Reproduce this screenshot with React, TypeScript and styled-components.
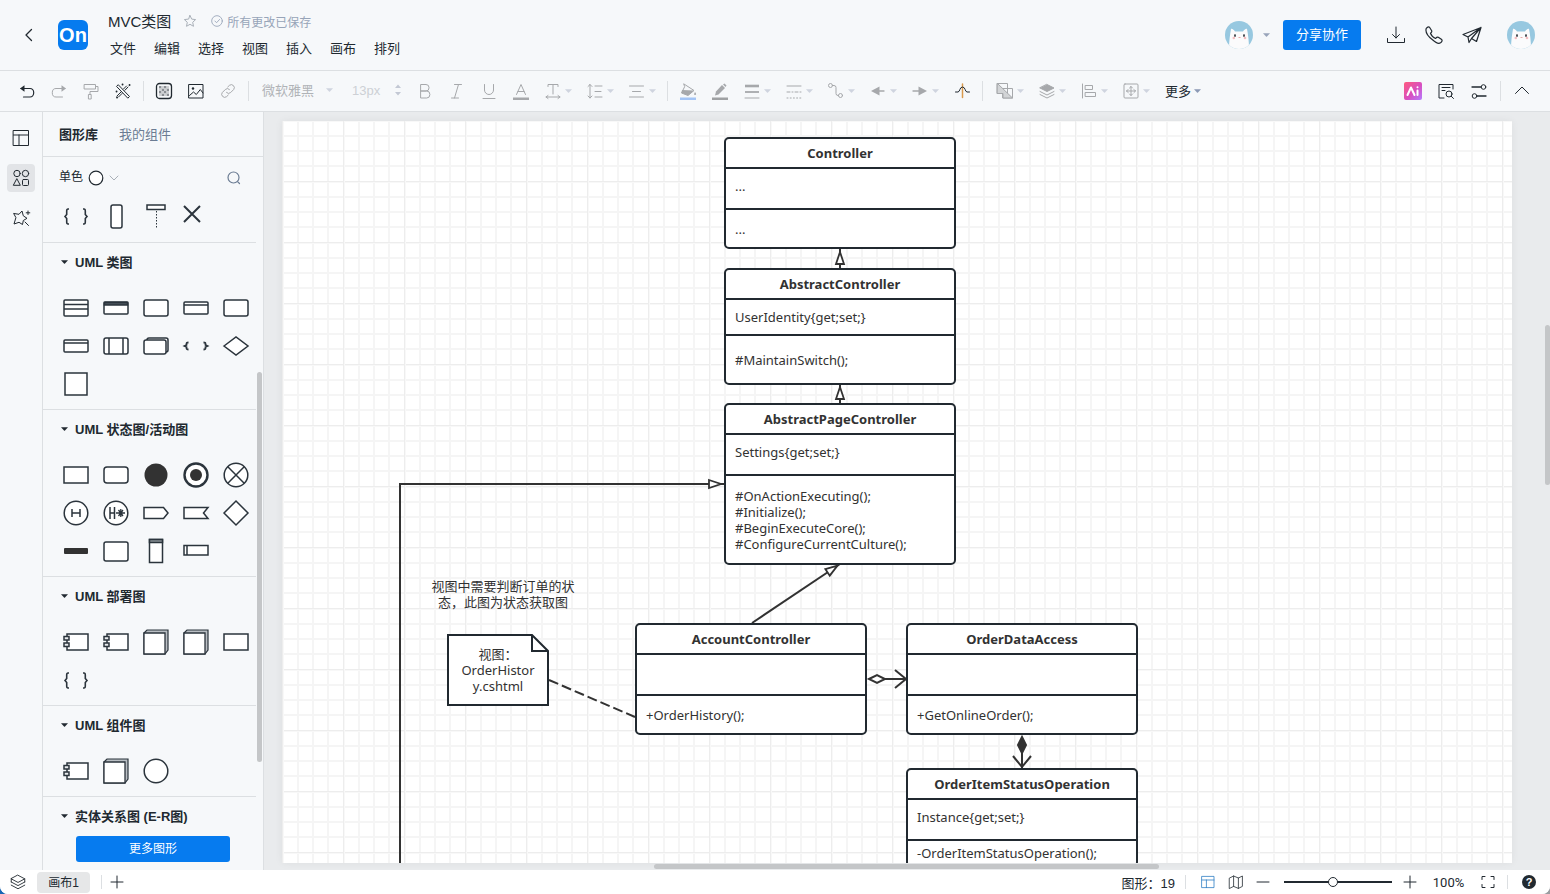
import React from "react";
import styled, { createGlobalStyle, css } from "styled-components";

const blue = "#067bef";
const ink = "#212930";
const line = "#dcdfe2";
const muted = "#a6a8ab";

const GlobalStyle = createGlobalStyle`
  * { box-sizing: border-box; }
  body {
    margin: 0;
    background: linear-gradient(90deg, #1766b5 50%, #9a9da1 50%);
    font-family: "Liberation Sans", "Noto Sans CJK SC", sans-serif;
    font-size: 13px;
    color: ${ink};
  }
  button, input, select { font: inherit; color: inherit; }
  button { border: 0; padding: 0; background: none; cursor: pointer; }
`;

/* ---------- page frame ---------- */

const Shell = styled.div`
  display: flex;
  flex-direction: column;
  height: 100vh;
  overflow: hidden;
  border-radius: 0 0 8px 8px;
  background: #f6f8fa;
`;

const Svg = styled.svg<{ $size?: number; $w?: number }>`
  display: block;
  flex: none;
  width: ${(p) => p.$size ?? 20}px;
  height: ${(p) => p.$size ?? 20}px;
  fill: none;
  stroke: currentColor;
  stroke-width: ${(p) => p.$w ?? 1};
  stroke-linecap: round;
  stroke-linejoin: round;
`;

const CaretSvg = styled.svg<{ $color?: string }>`
  display: block;
  flex: none;
  width: 7px;
  height: 4px;
  fill: ${(p) => p.$color ?? "#cfd4df"};
`;

const Caret = ({ color }: { color?: string }) => (
  <CaretSvg $color={color} viewBox="0 0 7 4" aria-hidden="true">
    <path d="M0 0.3h7L4 3.6a0.7 0.7 0 0 1-1 0z" />
  </CaretSvg>
);

/* ---------- header ---------- */

const Header = styled.header`
  flex: none;
  display: flex;
  align-items: center;
  height: 71px;
  padding: 0 15px 0 19px;
  border-bottom: 1px solid ${line};
`;

const Logo = styled.a`
  display: flex;
  align-items: center;
  justify-content: center;
  width: 30px;
  height: 30px;
  margin-left: 19px;
  border-radius: 6px;
  background: ${blue};
  color: #fff;
  font-size: 20px;
  font-weight: 700;
  text-decoration: none;
`;

const Heading = styled.div`
  margin-left: 13px;
`;

const TitleRow = styled.div`
  display: flex;
  align-items: center;
  height: 28px;
  padding-left: 7px;
`;

const Title = styled.h1`
  margin: 0 12px 0 0;
  padding-bottom: 2px;
  font-size: 15px;
  font-weight: 400;
`;

const Saved = styled.span`
  display: flex;
  align-items: center;
  gap: 4px;
  margin-left: 14px;
  color: #97a4b8;
  font-size: 12px;
`;

const Grey = styled.span`
  color: #a9b0b8;
`;

const Menu = styled.nav`
  display: flex;
  button {
    height: 28px;
    padding: 0 9px 3px;
  }
`;

const HeaderRight = styled.div`
  display: flex;
  align-items: center;
  margin-left: auto;
`;

const ShareButton = styled.button`
  width: 78px;
  height: 30px;
  margin: 0 16px 0 13px;
  padding-bottom: 3px;
  border-radius: 3px;
  background: ${blue};
  color: #fff;
`;

const HeaderIcon = styled.button`
  display: grid;
  place-items: center;
  width: 38px;
  height: 30px;
`;

const Collaborators = styled.button`
  display: flex;
  align-items: center;
  gap: 10px;
`;

const Account = styled.button`
  margin-left: 16px;
`;

const AvatarSvg = styled.svg`
  display: block;
  width: 28px;
  height: 28px;
  border-radius: 50%;
`;

const Avatar = () => (
  <AvatarSvg viewBox="0 0 28 28" aria-hidden="true">
    <rect width="28" height="28" fill="#97c8e0" />
    <path d="M4 28C4 20 5 14 6 8c1-1 3 1 4 2.500h8C19 9 21 7 22 8c1 5 2 12 2 20z" fill="#fbfbfc" />
    <ellipse cx="10" cy="14.500" rx="0.900" ry="1.500" fill="#3c4248" />
    <ellipse cx="19" cy="14.500" rx="0.900" ry="1.500" fill="#3c4248" />
    <circle cx="8.800" cy="17" r="1.300" fill="#f4bcc0" />
    <circle cx="20" cy="17" r="1.300" fill="#f4bcc0" />
    <path d="M13.500 16.500h2" stroke="#e9a9a9" />
  </AvatarSvg>
);

/* ---------- toolbar ---------- */

const Toolbar = styled.div`
  flex: none;
  display: flex;
  align-items: center;
  height: 41px;
  padding: 0 12px 0 11px;
  border-bottom: 1px solid ${line};
`;

const Tool = styled.button<{ $on?: boolean; $menu?: boolean }>`
  display: flex;
  align-items: center;
  flex: none;
  gap: 2px;
  width: ${(p) => (p.$menu ? 42 : 32)}px;
  height: 30px;
  padding-left: 6px;
  color: ${(p) => (p.$on ? ink : muted)};
`;

const ArrangeTools = styled.div`
  display: flex;
  margin-left: 2px;
`;

const Divider = styled.span<{ $short?: boolean }>`
  flex: none;
  width: 1px;
  height: ${(p) => (p.$short ? 14 : 20)}px;
  margin: 0 4px;
  background: ${line};
`;

const FontBox = styled.div`
  display: flex;
  align-items: center;
  width: 156px;
  padding: 0 0 2px 9px;
  color: #b0b3b7;
`;

const FontSelect = styled.select`
  width: 64px;
  appearance: none;
  border: 0;
  padding: 0;
  background: none;
`;

const SizeInput = styled.input`
  width: 40px;
  margin-left: 19px;
  border: 0;
  padding: 0;
  background: none;
  color: #cdd0d5;
`;

const Stepper = styled.span`
  color: #c3c8d4;
`;

const MoreButton = styled.button`
  display: flex;
  align-items: center;
  gap: 3px;
  margin-left: 8px;
  padding-bottom: 1px;
`;

const ToolRight = styled.div`
  display: flex;
  align-items: center;
  margin-left: auto;
`;

const SideTool = styled.button<{ $wide?: boolean }>`
  display: grid;
  place-items: center;
  width: ${(p) => (p.$wide ? 34 : 33)}px;
  height: 30px;
`;

const AiBadge = styled.span`
  display: grid;
  place-items: center;
  width: 18px;
  height: 18px;
  border-radius: 2px;
  background: linear-gradient(135deg, #ff5a7d 0%, #d84fc0 55%, #b57bff 100%);
  color: #fff;
`;

type ToolDef = { label: string; art: React.ReactNode; menu?: boolean; on?: boolean };

const tools: Record<string, ToolDef[]> = {
  history: [
    { label: "撤销", on: true, art: <><path d="M4 7.500h9a3.500 4 0 0 1 0 8.500H6.500" strokeWidth="1.200" /><path d="M3 7.500l4.500-3.200v6.400z" fill="currentColor" stroke="none" /></> },
    { label: "重做", art: <><path d="M16 7.500H7a3.500 4 0 0 0 0 8.500h6.500" /><path d="M17 7.500l-4.500-3.200v6.400z" fill="currentColor" stroke="none" /></> },
    { label: "格式刷", art: <><path d="M3.500 3.500h11v4.500h-11zM14.500 5.500h2.500v5H9v3" /><path d="M7.800 13.500h2.400v4.500H7.800z" /></> },
    { label: "美化", on: true, art: <><path d="M5.500 4l11 11.500-1.700 1.700-11-11.500zM13.500 5l-3 3M15 6l-3 3.200M8 11l-4 4M9 12.500l-3.500 3.500" /><path d="M9.500 3.500h.1M16.500 4h.1M3.500 10.500h.1M4 16.500h.1" strokeWidth="1.800" /></> },
  ],
  insert: [
    { label: "背景", on: true, art: <><rect x="2.500" y="2.500" width="15" height="15" rx="3" strokeWidth="1.300" /><path d="M5 5h2.500v2.500H5zM10 5h2.500v2.500H10zM7.500 7.500H10V10H7.500zM12.500 7.500H15V10h-2.500zM5 10h2.500v2.500H5zM10 10h2.500v2.500H10zM7.500 12.500H10V15H7.500zM12.500 12.500H15V15h-2.500z" fill="#8b8f94" stroke="none" /><path d="M7.500 5H10v2.500H7.500zM12.500 5H15v2.500h-2.500zM5 7.500h2.500V10H5zM10 7.500h2.500V10H10zM7.500 10H10v2.500H7.500zM12.500 10H15v2.500h-2.500zM5 12.500h2.500V15H5zM10 12.500h2.500V15H10z" fill="#cfd1d4" stroke="none" /></> },
    { label: "图片", on: true, art: <><path d="M3 3.500h14v13.500H3z" /><path d="M3.500 14.500l4-3.500 2.800 2.500 4-5L17 12" /><circle cx="7" cy="7.500" r="1.200" fill="currentColor" stroke="none" /></> },
    { label: "链接", art: <path d="M8.500 11.500a3 3 0 0 0 4.200 0l3-3a3 3 0 0 0-4.200-4.200L9.700 6M11.500 8.500a3 3 0 0 0-4.200 0l-3 3a3 3 0 0 0 4.200 4.200l1.800-1.700" /> },
  ],
  text: [
    { label: "加粗", art: <path d="M6 3.500h5a3 3.200 0 0 1 0 6.500H6zM6 10h5.700a3.200 3.500 0 0 1 0 7H6z" /> },
    { label: "斜体", art: <path d="M7.500 3.500h7M4.500 17h7M11.500 3.500L7.500 17" /> },
    { label: "下划线", art: <path d="M5.500 3.500v5.500a4.500 4.500 0 0 0 9 0V3.500M4 17.500h12" /> },
    { label: "文字颜色", art: <><path d="M5.500 13.500L10 3.500l4.500 10M7 10.500h6" /><path d="M2 16.500h16v2.500H2z" fill="currentColor" stroke="none" /></> },
    { label: "字间距", menu: true, art: <path d="M5 5.500v-2h10v2M10 3.500V13M3 16h14M5 14.500L3 16l2 1.500M15 14.500l2 1.500-2 1.500" /> },
    { label: "行高", menu: true, art: <path d="M5 3.500v13.500M3 5.500l2-2 2 2M3 15l2 2 2-2M10 5h7M10 10.500h6M10 16h7" /> },
    { label: "对齐", menu: true, art: <path d="M2.500 5h14M5.500 10.500h8M2.500 16h14" /> },
  ],
  line: [
    { label: "填充颜色", art: <><path d="M6 3l10 6.500-6 5L3.500 12 6.500 6z" /><path d="M4 9l12 .5-6 5L3.500 12z" fill="currentColor" stroke="none" /><path d="M17 11c1.500 2 1.500 3 0 3s-1-1 0-3z" fill="currentColor" stroke="none" /><path d="M2 16.500h16v2.500H2z" fill="#a3c4f5" stroke="none" /></> },
    { label: "线条颜色", art: <><path d="M5 14.500l1-4 6-6.500 3 3-6.500 6.500z" fill="currentColor" stroke="none" /><path d="M13 3.500l1.500-1 2 2L15.500 6z" fill="currentColor" stroke="none" /><path d="M2 16.500h16v2.500H2z" fill="#9fa1a3" stroke="none" /></> },
    { label: "线条宽度", menu: true, art: <><path d="M3 5h14" strokeWidth="2.600" strokeLinecap="butt" /><path d="M3 11h14" strokeWidth="1.800" strokeLinecap="butt" /><path d="M3 17h14" /></> },
    { label: "线条样式", menu: true, art: <><path d="M3 5h14" /><path d="M3 11h14" strokeDasharray="3 2 1 2" /><path d="M3 17h14" strokeDasharray="1 2.200" /></> },
    { label: "连线类型", menu: true, art: <><circle cx="4.500" cy="4.500" r="2" /><circle cx="14.500" cy="14.500" r="2" /><path d="M6.500 4.500H8a2 2 0 0 1 2 2v6a2 2 0 0 0 2 2h.5" /></> },
    { label: "起点", menu: true, art: <><path d="M8 10h8" strokeWidth="1.300" /><path d="M3 10l8.500-4.500v9z" fill="currentColor" stroke="none" /></> },
    { label: "终点", menu: true, art: <><path d="M3 10h8" strokeWidth="1.300" /><path d="M17 10L8.500 5.500v9z" fill="currentColor" stroke="none" /></> },
    { label: "跨线", on: true, art: <><path d="M10.500 3v13.500" stroke="#d99a4e" strokeWidth="1.500" /><path d="M3.500 11H6c2 0 1.500-5 4.500-5s2.500 5 4.500 5h2.500" /></> },
  ],
  arrange: [
    { label: "组合", menu: true, art: <><path d="M2.500 2.500h10v10h-10zM8 7.500h9.500V17H8z" /><path d="M2.500 2.500L17.500 17H8v-4.500H2.500z" fill="#d2d4d6" /></> },
    { label: "图层", menu: true, art: <><path d="M10 3.500l7 3.500-7 3.500L3 7z" fill="currentColor" /><path d="M3 10.500l7 3.500 7-3.500M3 13.500l7 3.500 7-3.500" /></> },
    { label: "对齐图形", menu: true, art: <path d="M3.500 3v14M6.500 4.500h7v4h-7zM6.500 11.500h10v4h-10z" /> },
    { label: "分布", menu: true, art: <><rect x="3" y="3" width="14" height="14" rx="1" /><path d="M10 5.500v9M5.500 10h9M8.500 7L10 5.500 11.500 7M8.500 13l1.500 1.500 1.500-1.500M7 8.500L5.500 10 7 11.500M13 8.500l1.500 1.500-1.500 1.500" /></> },
  ],
};

const ToolGroup = ({ items }: { items: ToolDef[] }) => (
  <>
    {items.map((t) => (
      <Tool key={t.label} $on={t.on} $menu={t.menu} aria-label={t.label}>
        <Svg viewBox="0 0 20 20">{t.art}</Svg>
        {t.menu && <Caret />}
      </Tool>
    ))}
  </>
);

/* ---------- left side ---------- */

const Body = styled.div`
  flex: 1;
  display: flex;
  min-height: 0;
`;

const Rail = styled.nav`
  flex: none;
  display: flex;
  flex-direction: column;
  align-items: center;
  gap: 12px;
  width: 43px;
  padding-top: 12px;
  border-right: 1px solid ${line};
`;

const RailButton = styled.button<{ $active?: boolean }>`
  display: grid;
  place-items: center;
  width: 28px;
  height: 28px;
  border-radius: 4px;
  background: ${(p) => (p.$active ? "#e2e4e7" : "none")};
`;

const Panel = styled.aside`
  flex: none;
  display: flex;
  flex-direction: column;
  width: 221px;
  border-right: 1px solid ${line};
`;

const Tabs = styled.div`
  flex: none;
  display: flex;
  align-items: center;
  gap: 21px;
  height: 45px;
  padding: 0 0 2px 16px;
  border-bottom: 1px solid ${line};
`;

const Tab = styled.button<{ $active?: boolean }>`
  ${(p) => (p.$active ? css`font-weight: 700;` : css`color: #6b7c93;`)}
`;

const StyleRow = styled.div`
  flex: none;
  display: flex;
  align-items: center;
  justify-content: space-between;
  height: 40px;
  padding: 2px 19px 0 16px;
`;

const StyleButton = styled.button`
  display: flex;
  align-items: center;
  gap: 5px;
  font-size: 12px;
  line-height: 16px;
`;

const StyleName = styled.span`
  padding-bottom: 2px;
`;

const Search = styled.button`
  color: #6b7c93;
`;

const ScrollArea = styled.div`
  position: relative;
  flex: 1;
  min-height: 0;
  overflow: hidden;
  padding-right: 7px;
`;

const PanelThumb = styled.span`
  position: absolute;
  right: 1px;
  top: 175px;
  width: 5px;
  height: 390px;
  border-radius: 3px;
  background: #c4c6c8;
`;

const ShapeGrid = styled.div`
  display: grid;
  grid-template-columns: repeat(5, 40px);
  grid-auto-rows: 38px;
  padding: 0 0 7px 13px;
`;

const Section = styled.section`
  border-top: 1px solid ${line};
  ${ShapeGrid} {
    padding: 6px 0 6px 13px;
  }
`;

const SectionTitle = styled.h2`
  display: flex;
  align-items: center;
  gap: 7px;
  height: 40px;
  margin: 0;
  padding: 0 0 3px 18px;
  font-size: 13px;
  font-weight: 700;
`;

const ShapeButton = styled.button`
  display: grid;
  place-items: center;
`;

const ShapeSvg = styled.svg`
  display: block;
  width: 30px;
  height: 30px;
  fill: #fff;
  stroke: #2b343c;
  stroke-width: 1.500;
`;

const PanelFoot = styled.div`
  flex: none;
  padding: 2px 33px 8px;
`;

const MoreShapes = styled.button`
  width: 100%;
  height: 26px;
  padding-bottom: 3px;
  border-radius: 3px;
  background: ${blue};
  color: #fff;
  font-size: 12px;
`;

const rect = (y: number, h: number, rx = 0) => <rect x="3" y={y} width="24" height={h} rx={rx} />;
const braces = <path d="M8 8H7c-1.300 0-1.300 1-1.300 2v3.500L4 15.500l1.700 2V21c0 1 0 2 1.300 2h1M22 8h1c1.300 0 1.300 1 1.300 2v3.500l1.700 2-1.700 2V21c0 1 0 2-1.300 2h-1" fill="none" strokeWidth="1.600" />;
const component = <><path d="M6 7h21v16H6z" /><path d="M3 9.500h5V13H3zM3 16h5v3.500H3z" fill="#e9ebed" /></>;
const cube = <><path d="M3 6l3-3h21v20l-3 4H3z" fill="#b9bec3" strokeWidth="1.200" /><path d="M3 6h21v21H3z" strokeWidth="1.300" /></>;
const roundRect = rect(7, 16, 2);

const lifelines: React.ReactNode[] = [
  braces,
  <rect x="10" y="4" width="11" height="23" rx="2" />,
  <><path d="M6 4h18v4.500H6z" /><path d="M15.500 10v17" strokeDasharray="1.500 1.500" strokeWidth="1" /></>,
  <path d="M3 5l16 16M19 5L3 21" strokeWidth="2" />,
];

const sections: { name: string; shapes: React.ReactNode[] }[] = [
  {
    name: "UML 类图",
    shapes: [
      <>{rect(7, 16, 1)}<path d="M3 11.500h24M3 16h24" /></>,
      <>{rect(9, 12, 1)}<path d="M3.500 9.500h23v2.500h-23z" fill="#4d565e" /></>,
      roundRect,
      <>{rect(9, 12, 1)}<path d="M3 12h24" /></>,
      roundRect,
      <>{rect(9, 12, 1)}<path d="M3 12h24" /></>,
      <>{rect(7, 16, 2)}<path d="M8 7v16M22 7v16" /></>,
      <><rect x="6" y="7" width="21" height="14" rx="2" /><rect x="3" y="9" width="22" height="14" rx="2" /></>,
      <path d="M7.500 11.500c-2 0-2 .5-2 1.500v1l-2 1 2 1v1c0 1 0 1.500 2 1.500M22.500 11.500c2 0 2 .5 2 1.500v1l2 1-2 1v1c0 1 0 1.500-2 1.500" fill="none" strokeWidth="1.800" />,
      <path d="M3 15l12-9 12 9-12 9z" />,
      <path d="M4 4h22v22H4z" />,
    ],
  },
  {
    name: "UML 状态图/活动图",
    shapes: [
      rect(7, 16),
      rect(7, 16, 3),
      <circle cx="15" cy="15" r="11.500" fill="#323232" stroke="none" />,
      <><circle cx="15" cy="15" r="11.500" strokeWidth="2.400" /><circle cx="15" cy="15" r="6" fill="#323232" stroke="none" /></>,
      <><circle cx="15" cy="15" r="11.800" /><path d="M6.800 6.800l16.400 16.400M23.200 6.800L6.800 23.200" /></>,
      <><circle cx="15" cy="15" r="11.800" /><path d="M11 11v8M19 11v8M11 15h8" /></>,
      <><circle cx="15" cy="15" r="11.800" /><path d="M9 9v12M13.500 9v12M9 15h4.500" /><path d="M15 15h9M17.500 12l4.500 6M22 12l-4.500 6M19.800 11v8" strokeWidth="1.300" /></>,
      <path d="M3 9.500h19.500l4.500 5.500-4.500 5.500H3z" />,
      <path d="M3 9.500h24L22.500 15l4.500 5.500H3z" />,
      <path d="M3 15L15 3l12 12-12 12z" />,
      <rect x="3" y="12" width="24" height="6" rx="1" fill="#323232" stroke="none" />,
      rect(6, 19, 2),
      <><path d="M8.500 3.500h13v23h-13z" /><path d="M8.500 3.500h13v3h-13z" fill="#8a9096" /></>,
      <><path d="M3 9.500h24v9.500H3zM6 9.500V19" /></>,
    ],
  },
  { name: "UML 部署图", shapes: [component, component, cube, cube, rect(7, 16), braces] },
  { name: "UML 组件图", shapes: [component, cube, <circle cx="15" cy="15" r="11.800" />] },
  { name: "实体关系图 (E-R图)", shapes: [] },
];

const Shapes = ({ items }: { items: React.ReactNode[] }) => (
  <ShapeGrid>
    {items.map((art, i) => (
      <ShapeButton key={i} aria-label={`图形 ${i + 1}`}>
        <ShapeSvg viewBox="0 0 30 30">{art}</ShapeSvg>
      </ShapeButton>
    ))}
  </ShapeGrid>
);

/* ---------- canvas ---------- */

const Workspace = styled.main`
  position: relative;
  flex: 1;
  min-width: 0;
  display: flex;
  padding: 9px 38px 7px 18px;
  overflow: hidden;
  background: #e9ebed;
`;

const Paper = styled.div`
  position: relative;
  flex: 1;
  min-width: 0;
  overflow: hidden;
  background-color: #fff;
  box-shadow: 0 0 8px rgba(0, 0, 0, 0.06);
  background-image:
    linear-gradient(90deg, #ededed 1px, #f8f8f8 1px, #f8f8f8 2px, transparent 2px),
    linear-gradient(#ededed 1px, #f8f8f8 1px, #f8f8f8 2px, transparent 2px),
    linear-gradient(90deg, transparent 15px, #f5f5f5 15px, #f5f5f5 17px, transparent 17px, transparent 30px, #f5f5f5 30px, #f5f5f5 32px, transparent 32px, transparent 45px, #f5f5f5 45px, #f5f5f5 47px, transparent 47px),
    linear-gradient(transparent 15px, #f5f5f5 15px, #f5f5f5 17px, transparent 17px, transparent 30px, #f5f5f5 30px, #f5f5f5 32px, transparent 32px, transparent 45px, #f5f5f5 45px, #f5f5f5 47px, transparent 47px);
  background-size: 61px 61px;
  background-position: 0 -1px;
`;

const Links = styled.svg`
  position: absolute;
  left: 0;
  top: 0;
  width: 100%;
  height: 100%;
  fill: none;
  stroke: #323232;
  stroke-width: 2;
`;

const ClassNode = styled.article<{ $x: number; $y: number }>`
  position: absolute;
  left: ${(p) => p.$x}px;
  top: ${(p) => p.$y}px;
  width: 232px;
  border: 2px solid ${ink};
  border-radius: 5px;
  background: #fff;
  font-family: "Noto Sans", "Noto Sans CJK SC", sans-serif;
  line-height: 16px;
  color: #323232;
`;

const ClassName = styled.h3`
  margin: 0;
  font-size: 13px;
  font-weight: 700;
  line-height: 28px;
  text-align: center;
`;

const Fields = styled.div<{ $h: number }>`
  height: ${(p) => p.$h + 2}px;
  padding: 9px 0 0 9px;
  border-top: 2px solid ${ink};
`;

const Methods = styled.div<{ $h: number }>`
  display: flex;
  flex-direction: column;
  justify-content: center;
  height: ${(p) => p.$h + 2}px;
  padding-left: 9px;
  border-top: 2px solid ${ink};
`;

const NoteNode = styled.div`
  position: absolute;
  left: 165px;
  top: 513px;
  width: 102px;
  height: 72px;
  padding: 12px 11px;
  font-family: "Noto Sans", "Noto Sans CJK SC", sans-serif;
  line-height: 16px;
  text-align: center;
  word-break: break-all;
  color: #323232;
`;

const Label = styled.p`
  position: absolute;
  left: 146px;
  top: 458px;
  width: 150px;
  margin: 0;
  line-height: 16px;
  text-align: center;
  color: #323232;
`;

const HThumb = styled.span`
  position: absolute;
  left: 390px;
  bottom: 1px;
  width: 505px;
  height: 5px;
  border-radius: 3px;
  background: #c4c6c8;
`;

const VThumb = styled.span`
  position: absolute;
  right: 0;
  top: 213px;
  width: 5px;
  height: 160px;
  border-radius: 3px;
  background: #c4c6c8;
`;

const classes = [
  { name: "Controller", x: 442, y: 16, fields: ["..."], fh: 39, methods: ["..."], mh: 37 },
  { name: "AbstractController", x: 442, y: 147, fields: ["UserIdentity{get;set;}"], fh: 34, methods: ["#MaintainSwitch();"], mh: 47 },
  {
    name: "AbstractPageController", x: 442, y: 282, fields: ["Settings{get;set;}"], fh: 39,
    methods: ["#OnActionExecuting();", "#Initialize();", "#BeginExecuteCore();", "#ConfigureCurrentCulture();"], mh: 87,
  },
  { name: "AccountController", x: 353, y: 502, fields: [], fh: 39, methods: ["+OrderHistory();"], mh: 37 },
  { name: "OrderDataAccess", x: 624, y: 502, fields: [], fh: 39, methods: ["+GetOnlineOrder();"], mh: 37 },
  { name: "OrderItemStatusOperation", x: 624, y: 647, fields: ["Instance{get;set;}"], fh: 39, methods: ["-OrderItemStatusOperation();"], mh: 24 },
];

const Diagram = () => (
  <Paper>
    <Links aria-hidden="true">
      <defs>
        <marker id="inherit" markerUnits="userSpaceOnUse" markerWidth="20" markerHeight="14" refX="17" refY="7" orient="auto">
          <path d="M2 3l12 4-12 4z" fill="#fff" stroke="#323232" strokeWidth="1.800" />
        </marker>
        <marker id="open" markerUnits="userSpaceOnUse" markerWidth="18" markerHeight="24" refX="15" refY="12" orient="auto">
          <path d="M3 3l11 9-11 9" fill="none" stroke="#323232" strokeWidth="2" />
        </marker>
      </defs>
      <path d="M558 148V128" markerEnd="url(#inherit)" />
      <path d="M558 283V263" markerEnd="url(#inherit)" />
      <path d="M118 760V363H442" markerEnd="url(#inherit)" />
      <path d="M470 502L558 443" markerEnd="url(#inherit)" />
      <path d="M267 559L353 596" strokeDasharray="10 4" />
      <path d="M603 558H625" markerEnd="url(#open)" />
      <path d="M587 558l8-4 8 4-8 4z" fill="#fff" />
      <path d="M740 628V647" markerEnd="url(#open)" />
      <path d="M740 616l4 8-4 8-4-8z" fill="#323232" />
      <path d="M166 514h84l16 16v54H166z" fill="#fff" stroke={ink} />
      <path d="M250 514v16h16" stroke={ink} />
    </Links>
    {classes.map((c) => (
      <ClassNode key={c.name} $x={c.x} $y={c.y}>
        <ClassName>{c.name}</ClassName>
        <Fields $h={c.fh}>{c.fields.map((f) => <div key={f}>{f}</div>)}</Fields>
        <Methods $h={c.mh}>{c.methods.map((m) => <span key={m}>{m}</span>)}</Methods>
      </ClassNode>
    ))}
    <Label>视图中需要判断订单的状态，此图为状态获取图</Label>
    <NoteNode>视图：<br />OrderHistory.cshtml</NoteNode>
  </Paper>
);

/* ---------- status bar ---------- */

const Footer = styled.footer`
  flex: none;
  display: flex;
  align-items: center;
  justify-content: space-between;
  height: 24px;
  padding: 0 14px 0 9px;
  background: #fff;
`;

const FootGroup = styled.div`
  display: flex;
  align-items: center;
`;

const PageTab = styled.button`
  width: 53px;
  height: 21px;
  margin: 0 7px 0 10px;
  padding-bottom: 2px;
  border-radius: 4px;
  background: #e6e7e8;
  font-size: 12px;
`;

const FootButton = styled.button<{ $w?: number; $blue?: boolean }>`
  display: grid;
  place-items: center;
  width: ${(p) => p.$w ?? 28}px;
  height: 24px;
  color: ${(p) => (p.$blue ? "#2f7fc4" : ink)};
`;

const Count = styled.span`
  margin-right: 6px;
`;

const Zoom = styled.input`
  appearance: none;
  width: 108px;
  height: 12px;
  margin: 0 4px;
  background: linear-gradient(${ink}, ${ink}) center / 100% 2px no-repeat;
  &::-webkit-slider-thumb {
    appearance: none;
    width: 10px;
    height: 10px;
    border: 1px solid ${ink};
    border-radius: 50%;
    background: #fff;
  }
`;

const Percent = styled.span`
  width: 49px;
  font-family: Roboto, sans-serif;
  text-align: center;
`;

const Help = styled.button`
  display: grid;
  place-items: center;
  width: 14px;
  height: 14px;
  margin-left: 10px;
  border-radius: 50%;
  background: ${ink};
  color: #fff;
  font-size: 11px;
  font-weight: 700;
`;

export default function App() {
  return (
    <Shell>
      <GlobalStyle />
      <Header>
        <button aria-label="返回"><Svg viewBox="0 0 20 20" $w={1.3}><path d="M12.500 4.500L7 10l5.500 5.500" /></Svg></button>
        <Logo href="#" aria-label="首页">On</Logo>
        <Heading>
          <TitleRow>
            <Title>MVC类图</Title>
            <Grey>
              <Svg viewBox="0 0 14 14" $size={14}><path d="M7 1.500l1.700 3.600 3.900.5-2.900 2.700.8 4L7 10.300l-3.500 2 .8-4L1.400 5.600l3.900-.5z" /></Svg>
            </Grey>
            <Saved>
              <Svg viewBox="0 0 14 14" $size={12}><circle cx="7" cy="7" r="6.200" /><path d="M4.500 7l2 2 3.500-3.800" /></Svg>
              所有更改已保存
            </Saved>
          </TitleRow>
          <Menu>
            {["文件", "编辑", "选择", "视图", "插入", "画布", "排列"].map((m) => <button key={m}>{m}</button>)}
          </Menu>
        </Heading>
        <HeaderRight>
          <Collaborators aria-label="协作者"><Avatar /><Caret color="#98a4ba" /></Collaborators>
          <ShareButton>分享协作</ShareButton>
          <HeaderIcon aria-label="下载"><Svg viewBox="0 0 20 20"><path d="M10 2v11M6.500 9.500L10 13l3.500-3.500M1.500 13.500v4h17v-4" /></Svg></HeaderIcon>
          <HeaderIcon aria-label="电话"><Svg viewBox="0 0 20 20" $w={1.2}><path d="M2.200 3.500C3 2.300 4.500 1.500 5.500 2.200l2.200 3.500c.4 1-.2 1.800-1.200 2.600.8 2.300 2.800 4.300 5 5.200.9-.9 1.700-1.600 2.800-1.200l3.400 2.300c.9 1 0 2.300-1.200 3.200-1.500 1-4.500.2-8-3C4.300 11.600 1.200 7 2.200 3.500z" /></Svg></HeaderIcon>
          <HeaderIcon aria-label="发送"><Svg viewBox="0 0 20 20" $w={1.2}><path d="M1 9.500L19 2.500l-4.500 14-5-3-2.500 4-1-5.500zM19 2.500L6 12M19 2.500l-9.500 11" /></Svg></HeaderIcon>
          <Account aria-label="账户"><Avatar /></Account>
        </HeaderRight>
      </Header>

      <Toolbar>
        <ToolGroup items={tools.history} />
        <Divider />
        <ToolGroup items={tools.insert} />
        <Divider />
        <FontBox>
          <FontSelect aria-label="字体" defaultValue="y"><option value="y">微软雅黑</option></FontSelect>
          <Caret />
          <SizeInput aria-label="字号" defaultValue="13px" />
          <Stepper>
            <Svg viewBox="0 0 12 12" $size={12}><path d="M3 4l3-3.500L9 4zM3 8l3 3.500L9 8z" fill="currentColor" stroke="none" /></Svg>
          </Stepper>
        </FontBox>
        <ToolGroup items={tools.text} />
        <Divider />
        <ToolGroup items={tools.line} />
        <Divider />
        <ArrangeTools>
          <ToolGroup items={tools.arrange} />
        </ArrangeTools>
        <MoreButton>更多<Caret color="#8b99b5" /></MoreButton>
        <ToolRight>
          <SideTool aria-label="AI">
            <AiBadge>
              <Svg viewBox="0 0 18 18" $size={18} $w={2}><path d="M3.500 13l3.500-7.500 3.500 7.500M13.500 8.500V13M13.500 5.200v.1" /></Svg>
            </AiBadge>
          </SideTool>
          <SideTool aria-label="查找"><Svg viewBox="0 0 20 20"><path d="M17 8V3.500H3V17h5M6 6.500h8M6 9.500h3" /><circle cx="13" cy="13" r="3" /><path d="M15.200 15.200L17.500 17.500" /></Svg></SideTool>
          <SideTool $wide aria-label="设置"><Svg viewBox="0 0 20 20"><path d="M3 6h9M8 15h9" strokeWidth="1.300" /><circle cx="14.500" cy="6" r="2.300" /><circle cx="5.500" cy="15" r="2.300" /></Svg></SideTool>
          <Divider />
          <SideTool aria-label="收起"><Svg viewBox="0 0 20 20"><path d="M3.500 12.500L10 6l6.500 6.500" /></Svg></SideTool>
        </ToolRight>
      </Toolbar>

      <Body>
        <Rail>
          <RailButton aria-label="模板"><Svg viewBox="0 0 20 20"><path d="M2.500 2.500h15v15h-15zM2.500 7h15M8 7v10.500" /></Svg></RailButton>
          <RailButton $active aria-label="图形"><Svg viewBox="0 0 20 20"><circle cx="6" cy="5.500" r="3.200" /><circle cx="14.500" cy="5.500" r="3.200" /><path d="M6 11l3.300 6.300H2.700z" /><rect x="11.500" y="11.500" width="6" height="6" rx="1" /></Svg></RailButton>
          <RailButton aria-label="智能"><Svg viewBox="0 0 20 20"><path d="M3 5.500l5 .8 3-3.300 1.300 4.800 3.700 2.500-3.700 2.200-.8 4-3.500-2.200-5 1.700L4.800 10zM14 14l3.500 3.500M17 3v3.500M15.200 4.800h3.600" /></Svg></RailButton>
        </Rail>
        <Panel>
          <Tabs>
            <Tab $active>图形库</Tab>
            <Tab>我的组件</Tab>
          </Tabs>
          <StyleRow>
            <StyleButton>
              <StyleName>单色</StyleName>
              <Svg viewBox="0 0 16 16" $size={16} $w={1.2}><circle cx="8" cy="8" r="6.800" fill="#fff" /></Svg>
              <Grey><Svg viewBox="0 0 10 10" $size={10}><path d="M1 3l4 4 4-4" /></Svg></Grey>
            </StyleButton>
            <Search aria-label="搜索"><Svg viewBox="0 0 20 20" $w={1.2}><circle cx="9.500" cy="9.500" r="5.500" /><path d="M13.800 13.800L15.500 15.500" /></Svg></Search>
          </StyleRow>
          <ScrollArea>
            <Shapes items={lifelines} />
            {sections.map((s) => (
              <Section key={s.name}>
                <SectionTitle><Caret color={ink} />{s.name}</SectionTitle>
                {s.shapes.length > 0 && <Shapes items={s.shapes} />}
              </Section>
            ))}
            <PanelThumb />
          </ScrollArea>
          <PanelFoot><MoreShapes>更多图形</MoreShapes></PanelFoot>
        </Panel>
        <Workspace>
          <Diagram />
          <HThumb />
          <VThumb />
        </Workspace>
      </Body>

      <Footer>
        <FootGroup>
          <FootButton $w={18} aria-label="图层"><Svg viewBox="0 0 20 20" $size={18}><path d="M10 2.500l7.500 4-7.500 4-7.500-4zM2.500 10l7.500 4 7.500-4M2.500 13.500l7.500 4 7.500-4M2.500 6.500V10M17.500 6.500V10" /></Svg></FootButton>
          <PageTab>画布1</PageTab>
          <Divider $short />
          <FootButton $w={22} aria-label="新建画布"><Svg viewBox="0 0 14 14" $size={14}><path d="M7 1v12M1 7h12" /></Svg></FootButton>
        </FootGroup>
        <FootGroup>
          <Count>图形：19</Count>
          <Divider $short />
          <FootButton $w={36} $blue aria-label="布局"><Svg viewBox="0 0 20 20" $size={16}><path d="M2.500 3h15v14h-15zM2.500 7.500h15M8 7.500V17" /></Svg></FootButton>
          <FootButton $w={20} aria-label="导航"><Svg viewBox="0 0 20 20" $size={16}><path d="M2 5l5-2.500 6 2.500 5-2.500v13L13 18l-6-2.500L2 18zM7 2.500v13M13 5v13" /></Svg></FootButton>
          <FootButton $w={34} aria-label="缩小"><Svg viewBox="0 0 14 14" $size={14}><path d="M1 7h12" /></Svg></FootButton>
          <Zoom type="range" aria-label="缩放" min={0} max={100} defaultValue={45} />
          <FootButton aria-label="放大"><Svg viewBox="0 0 14 14" $size={14}><path d="M7 1v12M1 7h12" /></Svg></FootButton>
          <Percent>100%</Percent>
          <FootButton $w={30} aria-label="全屏"><Svg viewBox="0 0 14 14" $size={14}><path d="M1 4.500V1.500h3M10 1.500h3v3M13 9.500v3h-3M4 12.500H1v-3" /></Svg></FootButton>
          <Divider $short />
          <Help aria-label="帮助">?</Help>
        </FootGroup>
      </Footer>
    </Shell>
  );
}
